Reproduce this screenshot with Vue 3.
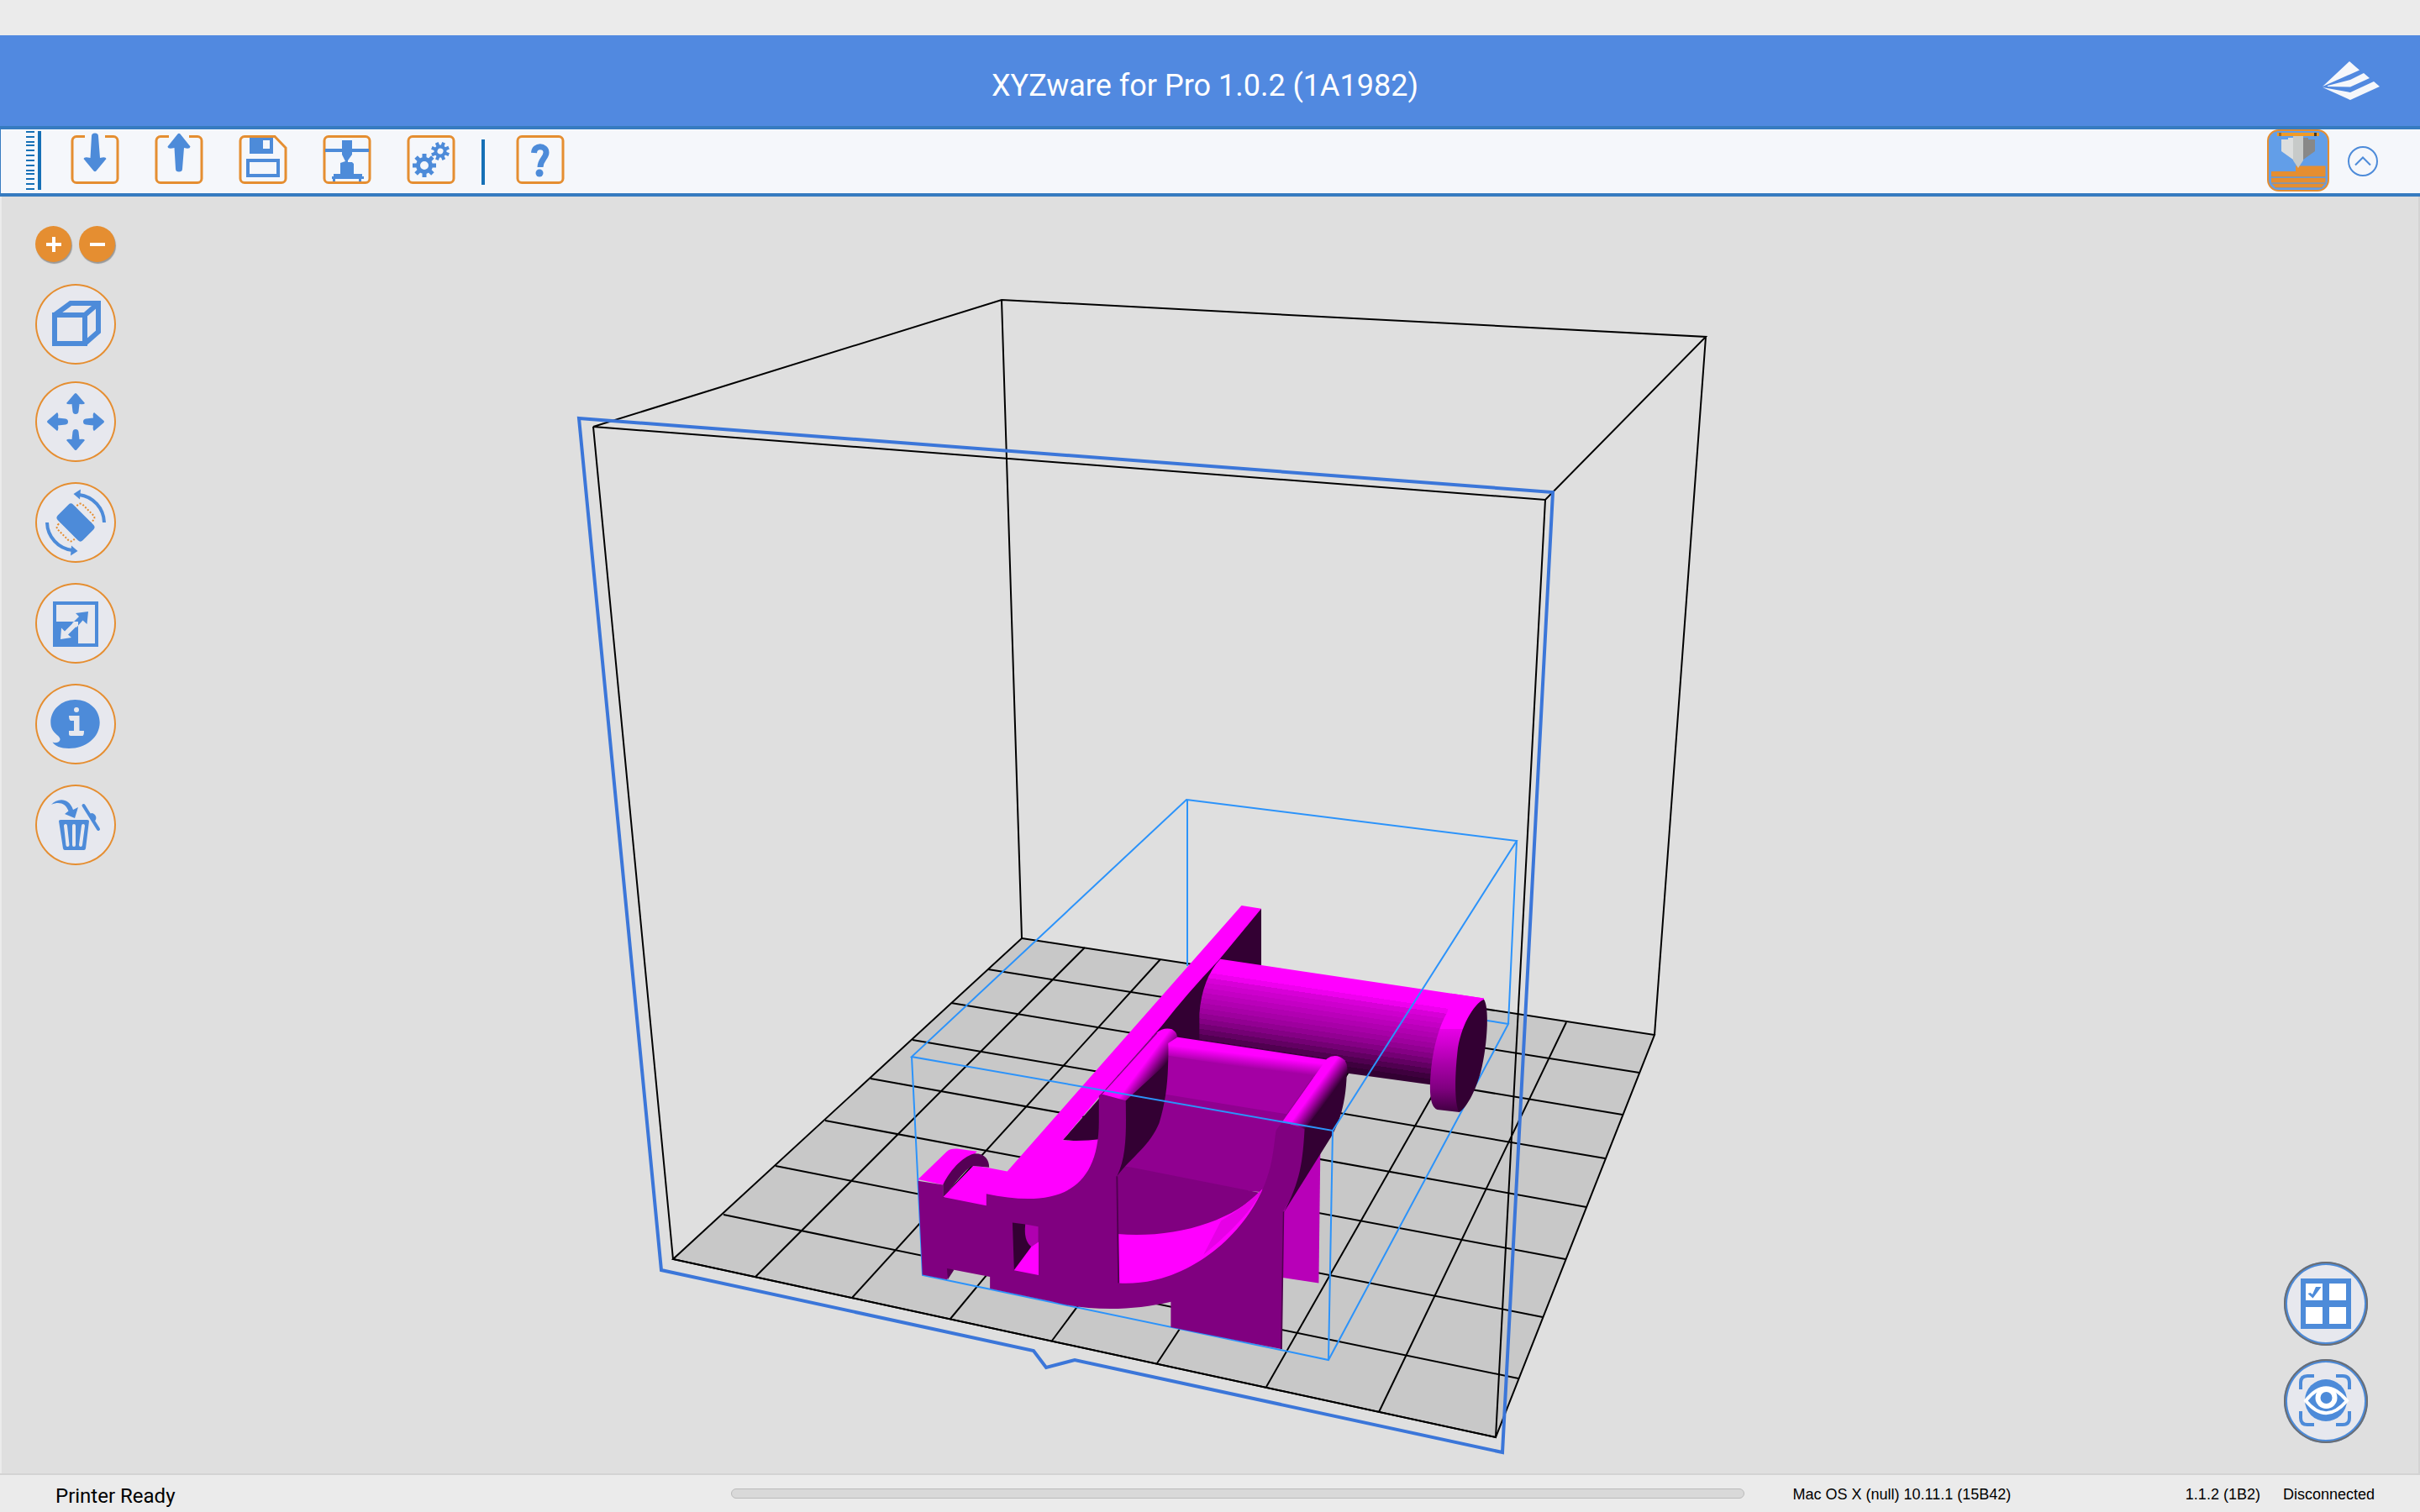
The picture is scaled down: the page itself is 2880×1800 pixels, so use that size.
<script setup>
const ticks = [0, 6, 12, 16, 22, 28, 34, 40, 46, 50, 56, 62, 68]

const gridLines = [
  [899, 1520, 1291, 1128], [1014, 1545, 1381, 1142], [1131, 1570, 1474, 1156], [1252, 1596, 1568, 1171],
  [1377, 1623, 1665, 1185], [1507, 1651, 1764, 1200], [1641, 1681, 1864, 1217],
  [1176, 1154, 1951, 1277], [1132, 1194, 1931, 1327], [1086, 1238, 1910, 1379], [1036, 1284, 1888, 1437],
  [982, 1334, 1863, 1499], [923, 1388, 1836, 1568], [861, 1446, 1807, 1641]
]

// Facets of the spool: each band keeps one shade of magenta
const shades = [255, 255, 255, 238, 215, 205, 196, 186, 177, 168, 158, 146, 132, 116, 98, 80, 62, 51]
const bands = shades.flatMap((v, i) => {
  const color = `rgb(${v},0,${v})`
  return [
    { offset: i / shades.length, color },
    { offset: (i + 1) / shades.length, color }
  ]
})

const tooth = [0, 45, 90, 135, 180, 225, 270, 315]
</script>

<template>
  <div class="app">
    <div class="menubar"></div>
    <header class="titlebar">
      <h1>XYZware for Pro 1.0.2 (1A1982)</h1>
      <svg class="logo" viewBox="0 0 68 46" aria-hidden="true">
        <path d="M0 30 32 0 44 10.500Z M6 29 33 22 49 14 56 20 33 30.500 6 30Z M0 31 33 37 61 24 68 30 33 46Z" />
      </svg>
    </header>

    <nav class="toolbar" aria-label="Main">
      <svg class="ruler" viewBox="0 0 18 70" aria-hidden="true">
        <rect v-for="t in ticks" :key="t" x="0" :y="t" width="10" height="2" />
        <rect x="14" y="0" width="4" height="70" />
      </svg>
      <button class="tool" aria-label="Import">
        <svg viewBox="0 0 58 58">
          <path class="frame" d="M17 1.500H7A5 5 0 0 0 2 6.500V51.500A5 5 0 0 0 7 56.500H51A5 5 0 0 0 56 51.500V6.500A5 5 0 0 0 51 1.500H41" />
          <path class="ink" d="M25 1Q25-2.500 29-2.500T33 1L35 27Q42 25 42.500 28L30.500 42.500Q29 44 27.500 42.500L15.500 28Q16 25 23.500 27Z" />
        </svg>
      </button>
      <button class="tool" aria-label="Export">
        <svg viewBox="0 0 58 58">
          <path class="frame" d="M17 1.500H7A5 5 0 0 0 2 6.500V51.500A5 5 0 0 0 7 56.500H51A5 5 0 0 0 56 51.500V6.500A5 5 0 0 0 51 1.500H41" />
          <path class="ink" d="M25 40Q25 43.500 29 43.500T33 40L35 15Q42 17 42.500 13.500L30.500-1.500Q29-3 27.500-1.500L15.500 13.500Q16 17 23.500 15Z" />
        </svg>
      </button>
      <button class="tool" aria-label="Save">
        <svg viewBox="0 0 58 58">
          <path class="frame" d="M43 1.500H7A5 5 0 0 0 2 6.500V51.500A5 5 0 0 0 7 56.500H51A5 5 0 0 0 56 51.500V15Z" />
          <path class="ink" fill-rule="evenodd" d="M13 3H41V22H13ZM29 6V16H37V6ZM9 28H49V50H9ZM13 32V46H45V32Z" />
        </svg>
      </button>
      <button class="tool" aria-label="Print">
        <svg viewBox="0 0 58 58">
          <rect class="frame" x="2" y="1.500" width="54" height="55" rx="5" />
          <path class="ink" d="M23 6H35V16H55V20H35V23L30 30V32H35L37 34V46H47V49H49V52H46V55H43V52H15V55H12V52H11V49H13V46H21V33L27 31 23 23V20H3V16H23Z" />
        </svg>
      </button>
      <button class="tool" aria-label="Settings">
        <svg viewBox="0 0 58 58">
          <rect class="frame" x="2" y="1.500" width="54" height="55" rx="5" />
          <g transform="translate(21 36)">
            <circle class="gear" r="7.500" />
            <rect v-for="a in tooth" :key="a" class="ink" x="-2.500" y="-14" width="5" height="6" :transform="`rotate(${a})`" />
          </g>
          <g transform="translate(40 19) rotate(22)">
            <circle class="gear small" r="5.500" />
            <rect v-for="a in tooth" :key="a" class="ink" x="-2" y="-11" width="4" height="5" :transform="`rotate(${a})`" />
          </g>
        </svg>
      </button>
      <span class="separator"></span>
      <button class="tool help" aria-label="Help">
        <svg viewBox="0 0 58 58">
          <rect class="frame" x="2" y="1.500" width="54" height="55" rx="5" />
          <path class="mark" d="M21.500 21C22 11 36 12 36 20.500C36 27 29 29 29 38" />
          <circle class="ink" cx="28" cy="45" r="4.500" />
        </svg>
      </button>

      <button class="printer" aria-label="Selected printer">
        <svg viewBox="0 0 74 74">
          <rect x="1" y="1" width="72" height="72" rx="13" fill="#629ee8" stroke="#e58e31" stroke-width="2" />
          <path fill="#e58e31" d="M34 43.500H69.500V50H34ZM5 50H69.500V56H5ZM5 58H69.500V63.500H5ZM6 65H68.500L65 69H10Z" />
          <path fill="#8893a4" d="M5 56H69.500V57.500H5ZM5 63.500H69.500V65H5ZM9 69H66V70H9Z" />
          <path fill="#dcdede" d="M17 12H25V10H31V36L17 26Z" />
          <path fill="#888" d="M43 10H49V12H57V26L43 36Z" />
          <path fill="#c7cac9" d="M31 8H43V37L37 46 31 37Z" />
          <path fill="#f09a26" d="M12 4H62V8H12Z" />
          <path fill="#a56c20" d="M14 4H17V8H14Z" />
          <path fill="#4c3a22" d="M56 4H59V8H56Z" />
        </svg>
      </button>
      <button class="collapse" aria-label="Collapse">
        <svg viewBox="0 0 36 36"><circle cx="18" cy="18" r="17" /><path d="M9 22.500 18 13.500 27 22.500" /></svg>
      </button>
    </nav>

    <main class="workspace">
      <svg class="scene" viewBox="0 234 2880 1520" role="img" aria-label="Print bed with model">
        <defs>
          <linearGradient id="spool" gradientUnits="userSpaceOnUse" x1="1000" y1="273" x2="947" y2="555">
            <stop v-for="(b, i) in bands" :key="i" :offset="b.offset" :stop-color="b.color" />
          </linearGradient>
          <linearGradient id="rim" x1="0" y1="0" x2="0" y2="1">
            <stop offset="0" stop-color="#f0f" /><stop offset=".3" stop-color="#f0f" />
            <stop offset=".3" stop-color="#e600e6" /><stop offset=".42" stop-color="#d000d0" />
            <stop offset=".6" stop-color="#a800a8" /><stop offset=".8" stop-color="#800080" /><stop offset="1" stop-color="#400040" />
          </linearGradient>
          <linearGradient id="ridge" gradientUnits="userSpaceOnUse" x1="880" y1="522" x2="872" y2="575">
            <stop offset="0" stop-color="#f0f" /><stop offset=".25" stop-color="#f0f" /><stop offset="1" stop-color="#a400a4" />
          </linearGradient>
          <linearGradient id="armLeft" gradientUnits="userSpaceOnUse" x1="622" y1="580" x2="662" y2="604">
            <stop offset="0" stop-color="#f0f" /><stop offset="1" stop-color="#303" />
          </linearGradient>
          <linearGradient id="armRight" gradientUnits="userSpaceOnUse" x1="1055" y1="645" x2="1093" y2="667">
            <stop offset="0" stop-color="#f0f" /><stop offset="1" stop-color="#303" />
          </linearGradient>
        </defs>

        <path class="floor" d="M1216 1117 1969 1232 1780 1711 801 1499Z" />
        <path class="edge" d="M1192 357 2030 401 1839 595 706 508ZM1192 357 1216 1117M2030 401 1969 1232" />
        <line v-for="(l, i) in gridLines" :key="i" class="edge" :x1="l[0]" :y1="l[1]" :x2="l[2]" :y2="l[3]" />
        <path class="bounds" d="M1413 952V1150M1770 1215 1795 1219 1581 1619 1098 1518 1085 1258M1805 1001 1795 1219" />

        <svg x="1060" y="1050" width="750" height="600" viewBox="0 0 1568 1568" preserveAspectRatio="none">
          <path class="dark" d="M922 83V268L800 510 750 520 690 520 520 810 428 803 640 500 850 150Z" />
          <path fill="#b800b8" d="M1069 840 1065 1248 972 1230V1010Z" />
          <path fill="url(#spool)" d="M820 240 1476 362 1400 640 768 532V410Q775 300 820 240Z" />
          <path fill="url(#rim)" d="M1395 347 1476 362 1480 500 1415 716 1360 708Q1342 700 1342 640C1342 560 1358 460 1385 405Z" />
          <path class="dark" d="M1476 365C1490 390 1484 500 1472 570 1460 640 1435 700 1415 716 1404 700 1402 620 1410 530 1417 450 1450 380 1476 365Z" />

          <path fill="#900090" d="M690 490 1080 560 1000 760 925 965 560 925 640 700Z" />
          <path fill="#a400a4" d="M690 480 1080 555 985 722 680 660Z" />
          <path fill="url(#ridge)" d="M690 478 1085 553 1062 612 690 540Z" />
          <path class="face" d="M560 880 600 888 925 968 800 1100 560 1110Z" />
          <path class="top" d="M564 1095C700 1110 850 1060 925 955 915 1090 740 1260 600 1252H564Z" />
          <path fill="#e600e6" d="M925 955C910 1000 865 1070 778 1160L822 1054Q875 1015 925 955Z" />

          <path class="top" d="M873 73 922 83 815 245Q735 350 675 447L535 645 428 803Q470 808 525 800L535 900 440 1010H200L130 980 205 883Q245 888 290 900Z" />
          <path class="top" d="M68 925 140 838Q148 829 165 830L215 838 150 915 130 942Z" />
          <path fill="#550055" d="M130 942C150 890 185 850 210 845 235 845 245 865 245 888L205 883C185 890 155 950 130 980Z" />

          <path fill-rule="evenodd" class="face" d="M68 930 130 942V980L238 1007V970C390 1010 520 985 518 740V665L532 650 585 675C588 800 590 860 563 915L568 1248C740 1260 890 1090 935 925 955 860 955 780 960 770L975 745 1035 765C1025 870 1025 930 977 1025L972 1453 697 1385V1306C600 1335 490 1335 400 1305L247 1265V1228L155 1206 140 1237 79 1222Z" />
          <path fill="#550055" d="M140 1202 158 1206 142 1237Z" />
          <path fill="#500050" d="M561 915H565L569 1248H565ZM976 1025H979L974 1453H970Z" />

          <path class="dark" d="M690 500C692 590 688 670 668 750 645 820 600 855 563 915 590 850 585 750 585 675Z" />
          <path fill="url(#armLeft)" d="M525 660 660 470Q680 450 700 458 715 470 712 484L690 502V560L585 680Z" />
          <path fill="#800080" d="M660 468 664 470 528 658 520 665Z" />

          <path class="dark" d="M1135 575C1135 690 1115 760 1085 815L977 1030C1020 930 1025 870 1030 765L1060 680Z" />
          <path fill="url(#armRight)" d="M975 745 1085 550Q1108 530 1130 555 1140 575 1134 600L1030 768Z" />

          <path class="dark" d="M303 1060 335 1065 350 1135 307 1207Z" />
          <path fill="#b000b0" d="M335 1065 367 1072V1122L350 1135Q330 1115 335 1065Z" />
          <path class="top" d="M368 1120V1223L307 1208 350 1135Z" />
        </svg>

        <path class="bounds" d="M1412 952 1805 1001 1586 1346 1085 1258ZM1586 1346 1581 1619" />
        <path class="edge" d="M706 508 801 1499 1780 1711 1839 595" />
        <path class="front" d="M689 498 1848 586 1788 1729 1279 1619 1245 1628 1230 1608 787 1512Z" />
      </svg>

      <aside class="tools">
        <div class="zoom">
          <button aria-label="Zoom in"><svg viewBox="0 0 18 18"><path d="M9 0V18M0 9H18" /></svg></button>
          <button aria-label="Zoom out"><svg viewBox="0 0 18 18"><path d="M0 9H18" /></svg></button>
        </div>
        <button class="round view" aria-label="View">
          <svg viewBox="0 0 96 96"><path class="line" stroke-width="6" d="M23 37H59V71H23ZM23 37 42 23H75V57L59 71M59 37 75 23" /></svg>
        </button>
        <button class="round" aria-label="Move">
          <svg viewBox="0 0 96 96">
            <path v-for="a in [0, 90, 180, 270]" :key="a" class="ink" :transform="`rotate(${a} 48 48)`" d="M48 14Q49 14 50 15.500L59 26Q58 28 52.500 27L51.500 36Q51 39 48 39T44.500 36L43.500 27Q38 28 37 26L46 15.500Q47 14 48 14Z" />
          </svg>
        </button>
        <button class="round" aria-label="Rotate">
          <svg viewBox="0 0 96 96">
            <rect class="ghost" x="27" y="35" width="42" height="26" rx="4" transform="rotate(-45 48 48)" />
            <rect class="ink" x="27" y="35" width="42" height="26" rx="4" transform="rotate(45 48 48)" />
            <g v-for="a in [0, 180]" :key="a" :transform="`rotate(${a} 48 48)`">
              <path class="line" stroke-width="4" d="M82 48A34 34 0 0 0 52 15" />
              <path class="ink" d="M45.500 14 54 8.500 53 20.500Z" />
            </g>
          </svg>
        </button>
        <button class="round" aria-label="Scale">
          <svg viewBox="0 0 96 96">
            <rect class="line" stroke-width="4" x="23" y="24" width="50" height="50" />
            <path class="ink" d="M22 46H51V75H22ZM63 34 48 36 52 40 44 48 49 53 56.500 44.500 61.500 49Z" />
            <path fill="#e7e8ee" d="M30 67 31 53.500 35 57.500 45 47.500 49 51.500 39 61.500 43 65Z" />
          </svg>
        </button>
        <button class="round" aria-label="Information">
          <svg viewBox="0 0 96 96">
            <path class="ink" d="M47.500 19C64 19 76.700 31 76.700 46 76.700 64 60 77 40 77 30 77 23 74 20.500 69.500 24 71 29.500 70 29.500 66 29.500 61 18.300 59 18.300 46 18.300 31 31 19 47.500 19Z" />
            <circle cx="49" cy="31" r="3" fill="#e7e8ee" />
            <path fill="#e7e8ee" d="M42 38H52.500V56H58Q58 62 56 62H42Q40 62 40 60V56H46V44H42Q40 43 40 38Z" />
          </svg>
        </button>
        <button class="round" aria-label="Delete">
          <svg viewBox="0 0 96 96">
            <path class="ink" d="M28 43.500Q28 42 30 42H62Q64 42 64 43.500L60 76Q59.500 78 58 78H35Q33.500 78 33 76ZM19 24C26 16 40 15 45 30L51 27 47 40 35 35 39.500 31.500C36 22 28 20 19 24Z" />
            <path class="slot" d="M36 49 38.500 72M46 49V72M57 49 54 72" />
            <path class="lid" d="M57.500 25 75 53" />
            <path class="ink" d="M64 36Q67 32 71 36 74 40 70.500 44L68 45Z" />
          </svg>
        </button>
      </aside>

      <aside class="views">
        <button class="round" aria-label="Select objects">
          <svg viewBox="0 0 100 100">
            <path class="ink" d="M20 20H80V80H20Z" />
            <path fill="#fff" d="M26 26H46V46H26ZM54 26H74V46H54ZM26 54H46V74H26ZM54 54H74V74H54Z" />
            <path class="ink" d="M28.500 38 31.500 37 34 39 38 30 44.500 30 34.500 43.500Z" />
          </svg>
        </button>
        <button class="round" aria-label="Preview">
          <svg viewBox="0 0 100 100">
            <path class="line" stroke-width="4" d="M20 36V28Q20 20 28 20H36M62 20H70Q78 20 78 28V36M78 62V70Q78 78 70 78H62M36 78H28Q20 78 20 70V62" />
            <circle class="ink" cx="50" cy="49" r="25" />
            <path class="eye" d="M26 49.500Q50 19 75 49.500Q50 79 26 49.500Z" />
            <circle cx="50.500" cy="46" r="13" fill="#fff" /><circle class="ink" cx="50.500" cy="46" r="7" />
          </svg>
        </button>
      </aside>
    </main>

    <footer class="status">
      <span class="ready">Printer Ready</span>
      <progress max="100" value="0" aria-label="Progress"></progress>
      <div class="info">
        <span class="system">Mac OS X (null) 10.11.1 (15B42)</span>
        <span>1.1.2 (1B2)</span>
        <span>Disconnected</span>
      </div>
    </footer>
  </div>
</template>

<style>
body { margin: 0; background: #ebebeb; }
</style>

<style scoped>
.app { display: flex; flex-direction: column; min-height: 100vh; background: #ebebeb; color: #000; font-family: Roboto, sans-serif; }
button { padding: 0; border: 0; background: none; cursor: pointer; }
svg { display: block; overflow: visible; }
.ink { fill: #4d8bd9; }
.line { fill: none; stroke: #4d8bd9; }

.menubar { height: 42px; }
.titlebar { display: grid; grid-template-columns: 1fr auto 1fr; align-items: center; height: 108px; padding: 0 48px 0 36px; background: #5189e0; }
h1 { grid-column: 2; margin: 12px 0 0; color: #fff; font-size: 36px; line-height: 44px; font-weight: 400; }
.logo { justify-self: end; width: 68px; height: 46px; fill: #f5f7fb; }

.toolbar { display: flex; align-items: flex-start; height: 76px; padding: 0 50px 0 30px; border: solid #367bc0; border-width: 4px 0 4px 1px; background: #f5f7fb; }
.ruler { width: 18px; height: 70px; margin: 2px 35px 0 0; fill: #1670b6; }
.tool { width: 58px; height: 58px; margin: 7px 42px 0 0; }
.frame { fill: none; stroke: #e58e31; stroke-width: 3; }
.gear { fill: none; stroke: #4d8bd9; stroke-width: 5; }
.gear.small { stroke-width: 4; }
.mark { fill: none; stroke: #4d8bd9; stroke-width: 7; }
.separator { width: 4px; height: 54px; margin: 12px 37px 0 -11px; background: #1670b6; }
.printer { width: 74px; height: 74px; margin: 0 22px 0 auto; }
.collapse { width: 36px; height: 36px; margin-top: 20px; }
.collapse svg { fill: none; stroke: #4d8bd9; stroke-width: 2; }

.workspace { position: relative; flex: 1; overflow: hidden; border: solid #d3d3d3; border-width: 0 2px 2px 0; background: #dfdfdf; box-shadow: inset 2px 0 #ebebeb; }
.scene { width: calc(100% + 2px); height: auto; overflow: hidden; }
.floor { fill: #c8c8c8; stroke: #000; stroke-width: 2; }
.edge { fill: none; stroke: #000; stroke-width: 2; }
.bounds { fill: none; stroke: #2c93fa; stroke-width: 2; }
.front { fill: none; stroke: #3b76d9; stroke-width: 4; }
.top { fill: #f0f; }
.face { fill: #800080; }
.dark { fill: #303; }

.tools { position: absolute; top: 35px; left: 42px; display: flex; flex-direction: column; gap: 24px; }
.zoom { display: flex; gap: 9px; margin-bottom: 2px; }
.zoom button { display: grid; place-items: center; width: 43px; height: 43px; border-radius: 50%; background: #e58e31; box-shadow: 1px 2px 1px #999; }
.zoom svg { width: 18px; height: 18px; stroke: #fff; stroke-width: 4; }
.tools .round { width: 96px; height: 96px; border-radius: 50%; background: #e7e8ee; box-shadow: inset 0 0 0 2px #e58e31; }
.tools .view { margin-bottom: -4px; }
.ghost { fill: none; stroke: #e58e31; stroke-width: 2; stroke-dasharray: 2 2; }
.slot { fill: none; stroke: #e7e8ee; stroke-width: 4; stroke-linecap: round; }
.lid { fill: none; stroke: #4d8bd9; stroke-width: 4; stroke-linecap: round; }
.views { position: absolute; right: 60px; bottom: 36px; display: flex; flex-direction: column; gap: 16px; }
.views .round { width: 100px; height: 100px; border-radius: 50%; background: #e7e8ee; box-shadow: inset 0 0 0 2px #6c6e72, inset 0 0 0 4px #4d8bd9; }
.eye { fill: #4d8bd9; stroke: #fff; stroke-width: 4; }

.status { display: grid; grid-template-columns: 30.2% 41.9% 1fr; align-items: center; height: 44px; font-size: 24px; line-height: 28px; white-space: nowrap; }
.ready { padding: 6px 0 0 66px; }
progress { display: block; box-sizing: border-box; width: 100%; height: 12px; appearance: none; border: 1px solid #bbb; border-radius: 6px; background: #d9d9d9; }
progress::-webkit-progress-bar { background: transparent; }
.info { display: flex; gap: 27px; padding: 2px 54px 0 57px; font-family: "Liberation Sans", sans-serif; font-size: 18px; }
.system { flex: 1; }
</style>
